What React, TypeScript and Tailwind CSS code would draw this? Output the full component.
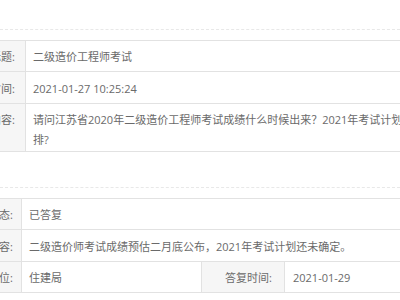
import React from "react";

const font = { fontFamily: '"Open Sans", "Noto Sans CJK SC", sans-serif' };

function Label({
  text,
  w,
  pr,
  top,
}: {
  text: string;
  w: string;
  pr: string;
  top?: boolean;
}) {
  const align = top ? "items-start pt-[6px] leading-[20px]" : "items-center pt-[3px]";
  return (
    <div
      className={`${w} ${pr} ${align} shrink-0 h-full flex justify-end whitespace-nowrap bg-[#f6f6f6] border-r border-[#e2e2e2]`}
    >
      {text}
    </div>
  );
}

function Row({
  label,
  h,
  w,
  pr,
  top,
  children,
}: {
  label: string;
  h: string;
  w: string;
  pr: string;
  top?: boolean;
  children: React.ReactNode;
}) {
  return (
    <div className={`${h} flex border-b border-[#e2e2e2]`}>
      <Label text={label} w={w} pr={pr} top={top} />
      {children}
    </div>
  );
}

export default function App() {
  return (
    <div
      className="w-[400px] h-[300px] overflow-hidden bg-white text-[11px] text-[#6a6a6a]"
      style={font}
    >
      {/* question block */}
      <div className="h-[30px] border-b border-dashed border-[#e8e8e8]" />
      <div className="mt-[10px] border-t border-[#e2e2e2]">
        <Row label="咨询标题:" h="h-[31px]" w="w-[26px]" pr="pr-[10px]">
          <div className="flex items-center pt-[3px] pl-[7px] whitespace-nowrap">二级造价工程师考试</div>
        </Row>
        <Row label="咨询时间:" h="h-[32px]" w="w-[26px]" pr="pr-[10px]">
          <div className="flex items-center pt-[3px] pl-[7px] whitespace-nowrap">2021-01-27 10:25:24</div>
        </Row>
        <Row label="咨询内容:" h="h-[48px]" w="w-[26px]" pr="pr-[10px]" top>
          <div className="pl-[7px] pt-[6px] leading-[20px] whitespace-nowrap">
            请问江苏省2020年二级造价工程师考试成绩什么时候出来？2021年考试计划如何安
            <br />
            排?
          </div>
        </Row>
      </div>

      {/* reply block */}
      <div className="h-[36px] border-b border-dashed border-[#e8e8e8]" />
      <div className="mt-[10px] border-t border-[#e2e2e2]">
        <Row label="办理状态:" h="h-[31px]" w="w-[22px]" pr="pr-[8px]">
          <div className="flex items-center pt-[3px] pl-[7px] whitespace-nowrap">已答复</div>
        </Row>
        <Row label="答复内容:" h="h-[32px]" w="w-[22px]" pr="pr-[8px]">
          <div className="flex items-center pt-[3px] pl-[7px] whitespace-nowrap">
            二级造价师考试成绩预估二月底公布，2021年考试计划还未确定。
          </div>
        </Row>
        <Row label="答复单位:" h="h-[31px]" w="w-[22px]" pr="pr-[8px]">
          <div className="w-[180px] shrink-0 flex items-center pt-[3px] pl-[7px] border-r border-[#e2e2e2] whitespace-nowrap">
            住建局
          </div>
          <div className="w-[83px] shrink-0 flex items-center justify-end pt-[3px] pr-[12px] bg-[#f6f6f6] border-r border-[#e2e2e2] whitespace-nowrap">
            答复时间:
          </div>
          <div className="flex items-center pt-[3px] pl-[8px] whitespace-nowrap">2021-01-29</div>
        </Row>
      </div>
    </div>
  );
}
